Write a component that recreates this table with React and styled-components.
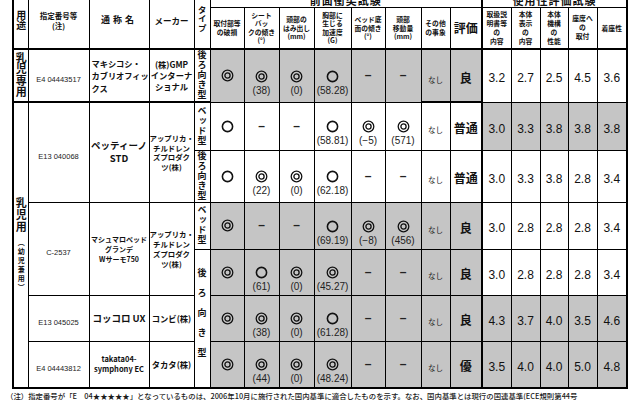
import React from "react";
import styled, { createGlobalStyle } from "styled-components";

const GlobalStyle = createGlobalStyle`
  html, body { margin: 0; padding: 0; background: #fff; }
  body {
    font-family: "Noto Sans CJK JP", "Liberation Sans", sans-serif;
    color: #111;
    overflow: hidden;
  }
`;

const Page = styled.div`
  width: 640px;
  height: 400px;
  overflow: hidden;
  padding-left: 6px;
  box-sizing: border-box;
`;

const Table = styled.table`
  margin: -9px 0 0 6px;
  border-collapse: collapse;
  table-layout: fixed;
  width: 615px;
  border: 2px solid #000;
`;

const Col = styled.col`
  width: ${(p) => p.$w}px;
`;

const Row = styled.tr`
  height: ${(p) => p.$h}px;
`;

const Cell = styled.td`
  border: 1px solid #000;
  border-left-width: ${(p) => (p.$thickL ? 2 : 1)}px;
  border-bottom-width: ${(p) => (p.$thickB ? 2 : 1)}px;
  background: ${(p) => (p.$shade ? "#c5c5c5" : "#fff")};
  padding: 0;
  text-align: center;
  vertical-align: middle;
  overflow: hidden;
  line-height: 1;
`;

const Head = styled.th`
  border: 1px solid #000;
  border-left-width: ${(p) => (p.$thickL ? 2 : 1)}px;
  border-bottom-width: 2px;
  background: #fff;
  padding: 0;
  text-align: center;
  vertical-align: middle;
  font-weight: 700;
  font-size: ${(p) => p.$size || 6.8}px;
  line-height: ${(p) => p.$lh || 8.5}px;
  letter-spacing: ${(p) => p.$ls || 0}px;
  color: #111;
  overflow: hidden;
  white-space: nowrap;
`;

const GroupHead = styled.th`
  border: 1px solid #000;
  border-left-width: ${(p) => (p.$thickL ? 2 : 1)}px;
  padding: 0;
  font-weight: 700;
  font-size: 11px;
  letter-spacing: 1px;
  line-height: 12px;
  color: #111;
`;

const Vert = styled.div`
  display: inline-block;
  writing-mode: vertical-rl;
  text-orientation: upright;
  font-weight: 700;
  font-size: ${(p) => p.$size}px;
  letter-spacing: ${(p) => p.$ls || 0}px;
  line-height: 1;
  white-space: nowrap;
`;

const VertSmall = styled.span`
  font-size: 7px;
  letter-spacing: 2px;
  font-weight: 700;
  padding-top: 6px;
`;

const Code = styled.span`
  font-family: "Liberation Sans", sans-serif;
  font-size: 7.5px;
  color: #222;
`;

const Name = styled.div`
  font-weight: 700;
  font-size: ${(p) => p.$size || 9}px;
  line-height: ${(p) => p.$lh || 12}px;
  text-align: ${(p) => p.$align || "center"};
  padding-left: ${(p) => (p.$align === "left" ? 2 : 0)}px;
  white-space: nowrap;
  letter-spacing: ${(p) => p.$ls || 0}px;
`;

const MarkBox = styled.div`
  display: flex;
  flex-direction: column;
  align-items: center;
  padding-top: ${(p) => (p.$hasVal ? 14 : 0)}px;
`;

const SymSvg = styled.svg`
  display: block;
  width: 13px;
  height: 13px;
`;

const Dash = styled.div`
  font-family: "Liberation Sans", sans-serif;
  font-size: 12px;
  font-weight: 700;
  line-height: 13px;
  color: #222;
`;

const Val = styled.div`
  margin-top: 2px;
  font-family: "Liberation Sans", sans-serif;
  font-size: 10px;
  line-height: 11px;
  color: #222;
`;

const Small = styled.span`
  font-size: 7.5px;
  color: #222;
`;

const Grade = styled.span`
  font-size: 12px;
  font-weight: 700;
`;

const Score = styled.span`
  font-family: "Liberation Sans", sans-serif;
  font-size: 12px;
  color: #111;
`;

const Footer = styled.div`
  margin-top: 2px;
  font-size: 7.4px;
  line-height: 9px;
  white-space: nowrap;
  color: #1a1a1a;
  font-weight: 500;
`;

const widths = [15, 61, 60, 45, 16, 34, 35, 35, 37, 34, 36, 29, 32, 29, 29, 28, 29, 30];

function Symbol({ s }) {
  if (s === "-") return <Dash>–</Dash>;
  return (
    <SymSvg viewBox="0 0 13 13">
      {s === "○" ? (
        <circle cx="6.5" cy="6.5" r="5.1" fill="none" stroke="#111" strokeWidth="1.6" />
      ) : (
        <>
          <circle cx="6.5" cy="6.5" r="5.3" fill="none" stroke="#111" strokeWidth="1.3" />
          <circle cx="6.5" cy="6.5" r="2.6" fill="none" stroke="#111" strokeWidth="1.3" />
        </>
      )}
    </SymSvg>
  );
}

function Mark({ s, v, shade }) {
  return (
    <Cell $shade={shade}>
      <MarkBox $hasVal={!!v}>
        <Symbol s={s} />
        {v && <Val>{v}</Val>}
      </MarkBox>
    </Cell>
  );
}

function Tests({ items, shade }) {
  return items.map(([s, v], i) => <Mark key={i} s={s} v={v} shade={shade} />);
}

function Scores({ items, shade }) {
  return items.map((n, i) => (
    <Cell key={i} $shade={shade} $thickL={i === 0}>
      <Score>{n}</Score>
    </Cell>
  ));
}

const Lines = ({ lines }) =>
  lines.map((l, i) => (
    <React.Fragment key={i}>
      {i > 0 && <br />}
      {l}
    </React.Fragment>
  ));

const maker = ["アップリカ・", "チルドレン", "ズプロダク", "ツ(株)"];

export default function App() {
  return (
    <Page>
      <GlobalStyle />
      <Table>
        <colgroup>
          {widths.map((w, i) => (
            <Col key={i} $w={w} />
          ))}
        </colgroup>
        <thead>
          <Row $h={15}>
            <Head rowSpan={2}>
              <Vert $size={10}>用途</Vert>
            </Head>
            <Head rowSpan={2} $size={7.5} $lh={10}>
              <Lines lines={["指定番号等", "(注)"]} />
            </Head>
            <Head rowSpan={2} $size={9} $ls={3}>通称名</Head>
            <Head rowSpan={2} $size={8.5}>メーカー</Head>
            <Head rowSpan={2}>
              <Vert $size={8.5} $ls={0.5}>タイプ</Vert>
            </Head>
            <GroupHead colSpan={8}>前面衝突試験</GroupHead>
            <GroupHead colSpan={5} $thickL>使用性評価試験</GroupHead>
          </Row>
          <Row $h={42}>
            <Head><Lines lines={["取付部等", "の破損"]} /></Head>
            <Head><Lines lines={["シート", "バッ", "クの傾き", "(°)"]} /></Head>
            <Head><Lines lines={["頭部の", "はみ出し", "(mm)"]} /></Head>
            <Head><Lines lines={["胸部に", "生じる", "加速度", "(G)"]} /></Head>
            <Head><Lines lines={["ベッド底", "面の傾き", "(°)"]} /></Head>
            <Head><Lines lines={["頭部", "移動量", "(mm)"]} /></Head>
            <Head><Lines lines={["その他", "の事象"]} /></Head>
            <Head $size={12} $lh={14}>評価</Head>
            <Head $thickL $lh={9}><Lines lines={["取扱説", "明書等", "の", "内容"]} /></Head>
            <Head $lh={9}><Lines lines={["本体", "表示", "の", "内容"]} /></Head>
            <Head $lh={9}><Lines lines={["本体", "機構", "の", "性能"]} /></Head>
            <Head $lh={9}><Lines lines={["座席へ", "の", "取付"]} /></Head>
            <Head>着座性</Head>
          </Row>
        </thead>
        <tbody>
          <Row $h={49}>
            <Cell $thickB><Vert $size={11} $ls={0.5}>乳児専用</Vert></Cell>
            <Cell $thickB><Code>E4 04443517</Code></Cell>
            <Cell $thickB>
              <Name $align="left" $size={8.2} $lh={12.5}>
                <Lines lines={["マキシコシ・", "カブリオフィッ", "クス"]} />
              </Name>
            </Cell>
            <Cell $thickB>
              <Name $size={8.3} $lh={11}>
                <Lines lines={["(株)GMP", "インターナ", "ショナル"]} />
              </Name>
            </Cell>
            <Cell $thickB><Vert $size={9} $ls={1}>後ろ向き型</Vert></Cell>
            <Tests shade items={[["◎"], ["◎", "(38)"], ["◎", "(0)"], ["○", "(58.28)"], ["-"], ["-"]]} />
            <Cell $shade $thickB><Small>なし</Small></Cell>
            <Cell $shade $thickB><Grade>良</Grade></Cell>
            <Scores items={["3.2", "2.7", "2.5", "4.5", "3.6"]} />
          </Row>

          <Row $h={48}>
            <Cell rowSpan={6}>
              <Vert $size={11} $ls={1}>
                乳児用<VertSmall>（幼児兼用）</VertSmall>
              </Vert>
            </Cell>
            <Cell rowSpan={2}><Code>E13 040068</Code></Cell>
            <Cell rowSpan={2}>
              <Name $size={9.5} $lh={13}>
                <Lines lines={["ペッティーノ", "STD"]} />
              </Name>
            </Cell>
            <Cell rowSpan={2}>
              <Name $size={7.4} $lh={9.5}><Lines lines={maker} /></Name>
            </Cell>
            <Cell><Vert $size={9} $ls={1}>ベッド型</Vert></Cell>
            <Tests items={[["○"], ["-"], ["-"], ["○", "(58.81)"], ["◎", "(−5)"], ["◎", "(571)"]]} />
            <Cell><Small>なし</Small></Cell>
            <Cell><Grade>普通</Grade></Cell>
            <Scores shade items={["3.0", "3.3", "3.8", "3.8", "3.8"]} />
          </Row>
          <Row $h={50}>
            <Cell><Vert $size={9} $ls={1}>後ろ向き型</Vert></Cell>
            <Tests items={[["○"], ["◎", "(22)"], ["◎", "(0)"], ["○", "(62.18)"], ["-"], ["-"]]} />
            <Cell><Small>なし</Small></Cell>
            <Cell><Grade>普通</Grade></Cell>
            <Scores items={["3.0", "3.3", "3.8", "2.8", "3.4"]} />
          </Row>

          <Row $h={47}>
            <Cell rowSpan={2}><Code>C-2537</Code></Cell>
            <Cell rowSpan={2}>
              <Name $size={7} $lh={10}>
                <Lines lines={["マシュマロベッド", "グランデ", "Wサーモ750"]} />
              </Name>
            </Cell>
            <Cell rowSpan={2}>
              <Name $size={7.4} $lh={10}><Lines lines={maker} /></Name>
            </Cell>
            <Cell><Vert $size={9} $ls={1}>ベッド型</Vert></Cell>
            <Tests shade items={[["◎"], ["-"], ["-"], ["○", "(69.19)"], ["◎", "(−8)"], ["◎", "(456)"]]} />
            <Cell $shade><Small>なし</Small></Cell>
            <Cell $shade><Grade>良</Grade></Cell>
            <Scores items={["3.0", "2.8", "2.8", "2.8", "3.4"]} />
          </Row>
          <Row $h={46}>
            <Cell rowSpan={3}><Vert $size={9} $ls={11}>後ろ向き型</Vert></Cell>
            <Tests shade items={[["◎"], ["○", "(61)"], ["◎", "(0)"], ["◎", "(45.27)"], ["-"], ["-"]]} />
            <Cell $shade><Small>なし</Small></Cell>
            <Cell $shade><Grade>良</Grade></Cell>
            <Scores items={["3.0", "2.8", "2.8", "2.8", "3.4"]} />
          </Row>

          <Row $h={46}>
            <Cell><Code>E13 045025</Code></Cell>
            <Cell><Name $size={9.5}>コッコロ UX</Name></Cell>
            <Cell><Name $size={8.3}>コンビ(株)</Name></Cell>
            <Tests shade items={[["◎"], ["◎", "(38)"], ["◎", "(0)"], ["○", "(61.28)"], ["-"], ["-"]]} />
            <Cell $shade><Small>なし</Small></Cell>
            <Cell $shade><Grade>良</Grade></Cell>
            <Scores shade items={["4.3", "3.7", "4.0", "3.5", "4.6"]} />
          </Row>

          <Row $h={47}>
            <Cell><Code>E4 04443812</Code></Cell>
            <Cell>
              <Name $size={7.5} $lh={10}>
                <Lines lines={["takata04-", "symphony EC"]} />
              </Name>
            </Cell>
            <Cell><Name $size={8.3}>タカタ(株)</Name></Cell>
            <Tests shade items={[["◎"], ["◎", "(44)"], ["◎", "(0)"], ["◎", "(48.24)"], ["-"], ["-"]]} />
            <Cell $shade><Small>なし</Small></Cell>
            <Cell $shade><Grade>優</Grade></Cell>
            <Scores shade items={["3.5", "4.0", "4.0", "5.0", "4.8"]} />
          </Row>
        </tbody>
      </Table>
      <Footer>
        （注）指定番号が「E　04★★★★★」となっているものは、2006年10月に施行された国内基準に適合したものを示す。なお、国内基準とは現行の国連基準(ECE規則第44号
      </Footer>
    </Page>
  );
}
